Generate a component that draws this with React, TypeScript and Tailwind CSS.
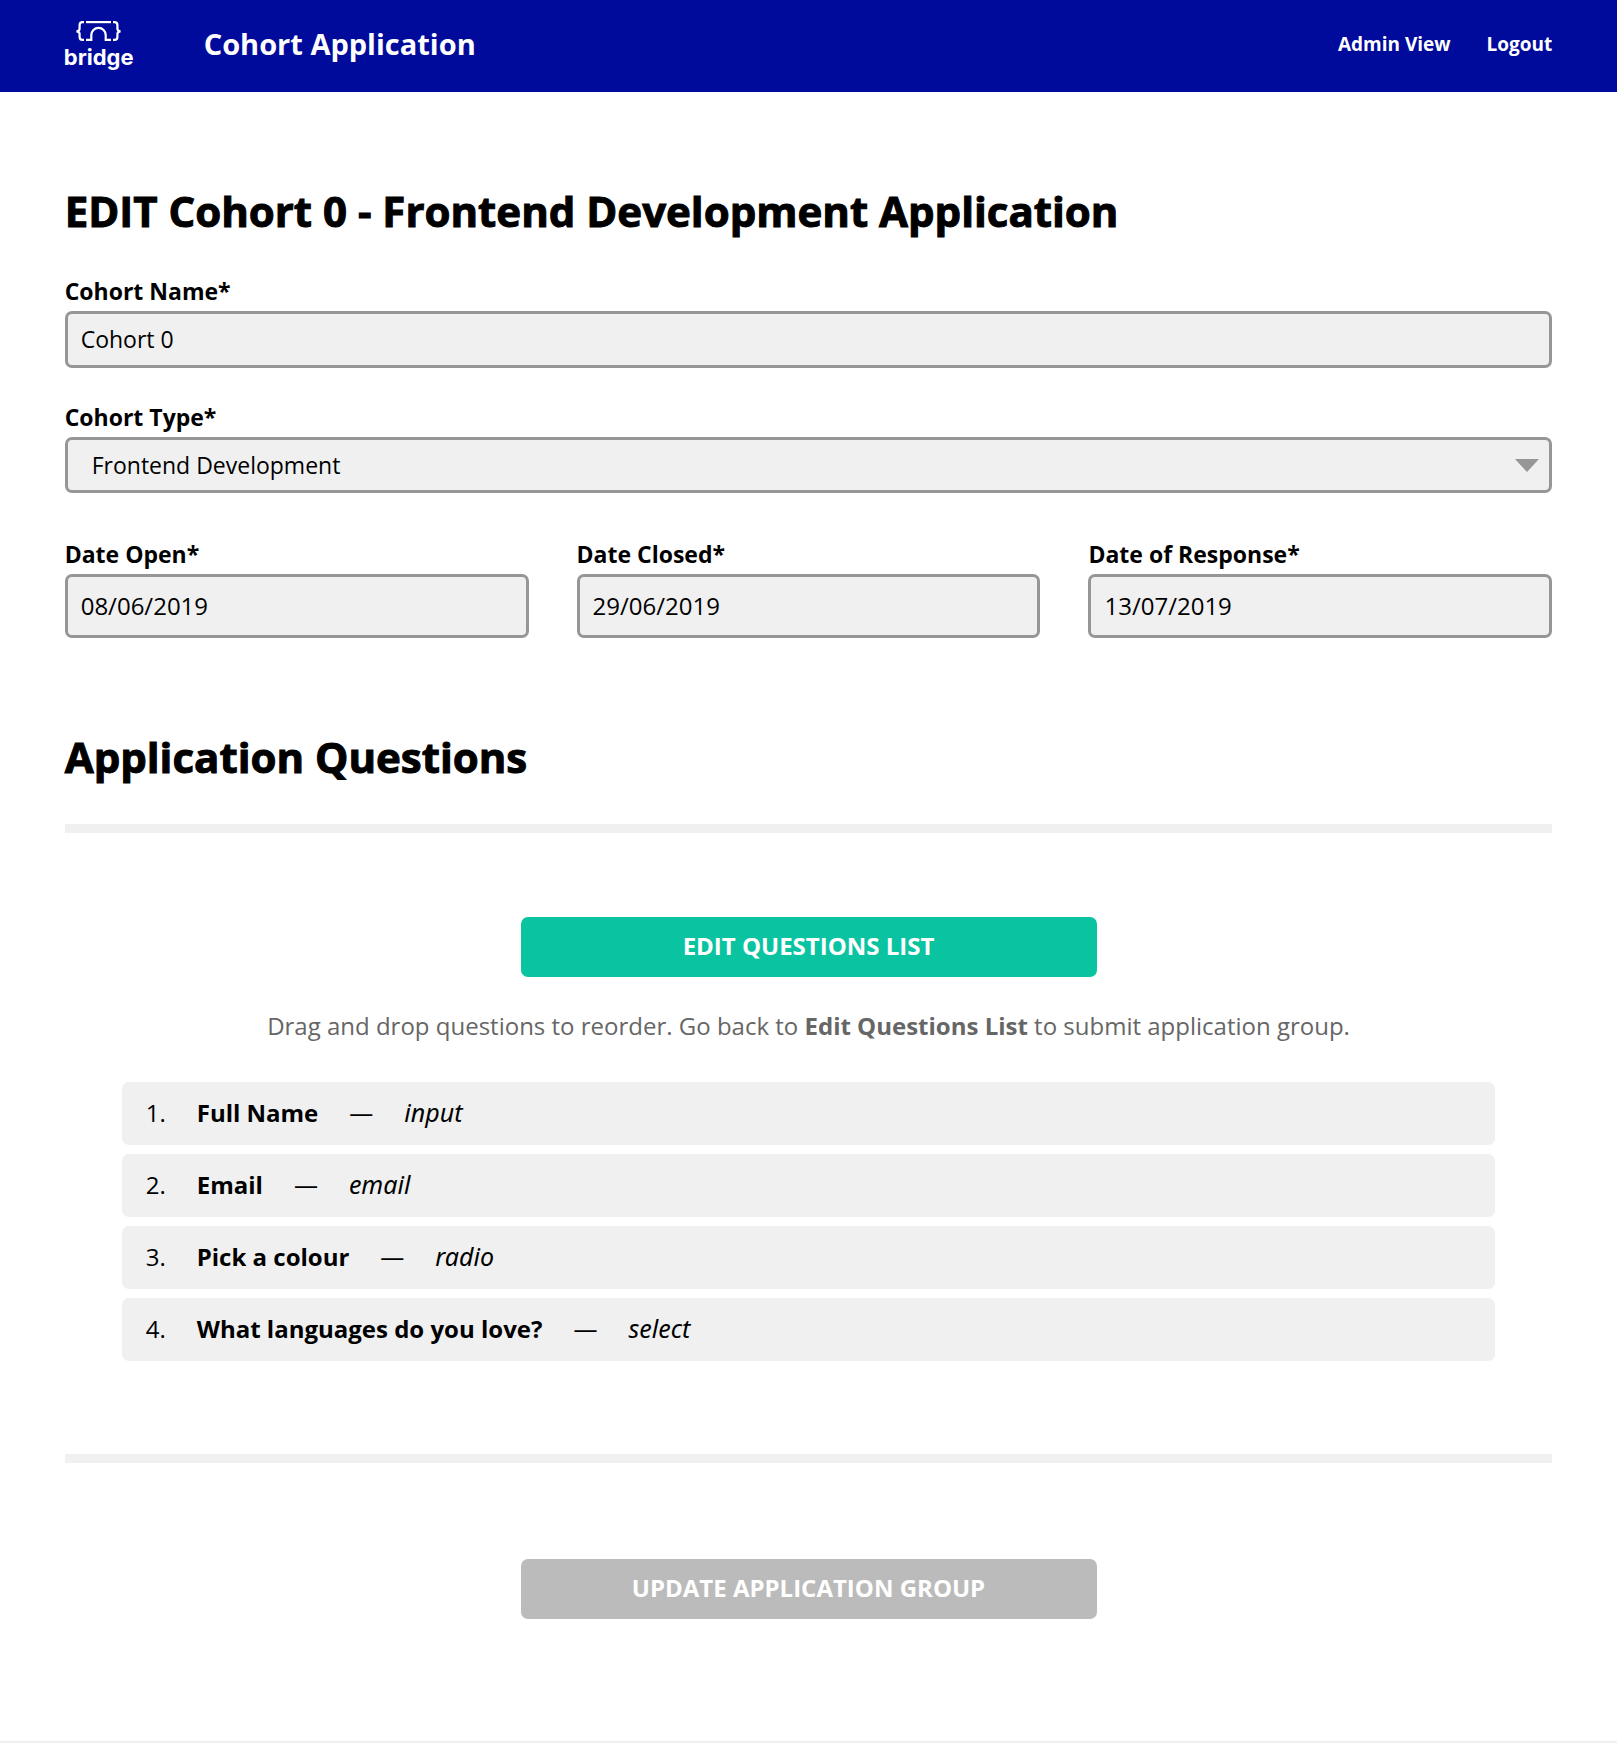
import { useState } from "react";

const fieldClass =
  "block w-full rounded-[7px] border-[3px] border-[#969696] bg-[#f0f0f0] text-black outline-none";

const headingClass =
  "text-[42px] leading-[52px] font-bold [-webkit-text-stroke:1px_currentColor]";

const buttonClass =
  "mx-auto block h-[60px] w-full max-w-[576px] rounded-[7px] pb-[2px] text-[24px] font-bold text-white";

const cohortTypes = ["Frontend Development", "Backend Development", "Design"];

const questions = [
  { name: "Full Name", type: "input" },
  { name: "Email", type: "email" },
  { name: "Pick a colour", type: "radio" },
  { name: "What languages do you love?", type: "select" },
];

const dates = [
  { id: "date-open", label: "Date Open*", value: "08/06/2019" },
  { id: "date-closed", label: "Date Closed*", value: "29/06/2019" },
  { id: "date-response", label: "Date of Response*", value: "13/07/2019" },
];

function Logo() {
  return (
    <a href="#" className="flex w-[68px] flex-col items-center pt-[5px] text-white">
      <svg width="45" height="21" viewBox="0 0 45 21" fill="none" stroke="currentColor" strokeWidth="2.2" aria-hidden="true">
        <path d="M8 1.1H6.4Q3.6 1.1 3.6 4V7.6Q3.6 10.3 0.4 10.3Q3.6 10.3 3.6 13V16Q3.6 18.8 6.4 18.8H8" />
        <path d="M37 1.1H38.6Q41.4 1.1 41.4 4V7.6Q41.4 10.3 44.6 10.3Q41.4 10.3 41.4 13V16Q41.4 18.8 38.6 18.8H37" />
        <path d="M10 1.1H35" />
        <path d="M10 18.8H15.3V14A7.2 7.2 0 0 1 29.7 14V18.8H35" />
      </svg>
      <span className="font-['Inter',sans-serif] text-[22px] leading-[30px] font-bold">bridge</span>
    </a>
  );
}

function Label({ htmlFor, children }: { htmlFor: string; children: string }) {
  return (
    <label htmlFor={htmlFor} className="mb-1 block text-[23px] leading-8 font-bold">
      {children}
    </label>
  );
}

export default function App() {
  const [name, setName] = useState("Cohort 0");
  const [type, setType] = useState(cohortTypes[0]);

  return (
    <div className="bg-white font-['Open_Sans',sans-serif] text-black">
      <header className="flex items-center bg-[#000a9b] px-[4%] pt-4 pb-5 text-white">
        <Logo />
        <span className="ml-[71px] text-[29px] leading-10 font-bold">Cohort Application</span>
        <nav className="ml-auto flex gap-9 text-[19px] leading-7 font-bold">
          <a href="#">Admin View</a>
          <a href="#">Logout</a>
        </nav>
      </header>

      <main className="px-[4%] pt-[93px] pb-[122px]">
        <h1 className={headingClass}>EDIT Cohort 0 - Frontend Development Application</h1>

        <div className="mt-[38px]">
          <Label htmlFor="cohort-name">Cohort Name*</Label>
          <input
            id="cohort-name"
            type="text"
            value={name}
            onChange={(e) => setName(e.target.value)}
            className={`${fieldClass} h-[57px] px-[13px] pb-[2px] text-[23px]`}
          />
        </div>

        <div className="mt-[33px]">
          <Label htmlFor="cohort-type">Cohort Type*</Label>
          <div className="relative">
            <select
              id="cohort-type"
              value={type}
              onChange={(e) => setType(e.target.value)}
              className={`${fieldClass} h-14 appearance-none px-6 text-[23px]`}
            >
              {cohortTypes.map((t) => (
                <option key={t}>{t}</option>
              ))}
            </select>
            <svg
              className="pointer-events-none absolute top-[22px] right-[13px] text-[#969696]"
              width="24"
              height="13"
              viewBox="0 0 24 13"
              aria-hidden="true"
            >
              <path d="M0 0H24L12 13Z" fill="currentColor" />
            </svg>
          </div>
        </div>

        <div className="mt-[45px] grid grid-cols-3 gap-12">
          {dates.map((d) => (
            <div key={d.id}>
              <Label htmlFor={d.id}>{d.label}</Label>
              <input
                id={d.id}
                type="text"
                defaultValue={d.value}
                className={`${fieldClass} h-16 px-[13px] pb-[2px] text-[24px]`}
              />
            </div>
          ))}
        </div>

        <h2 className={`mt-[93px] ${headingClass}`}>Application Questions</h2>
        <hr className="mt-[41px] h-[9px] border-0 bg-[#f0f0f0]" />

        <section className="mt-[84px] px-[57px]">
          <button type="button" className={`${buttonClass} bg-[#0ac4a1]`}>
            EDIT QUESTIONS LIST
          </button>
          <p className="mt-[31px] text-center text-[24px] leading-9 text-[#666666]">
            Drag and drop questions to reorder. Go back to <strong className="font-bold">Edit Questions List</strong> to
            submit application group.
          </p>
          <ol className="mt-[38px] flex flex-col gap-[9px]">
            {questions.map((q, i) => (
              <li
                key={q.name}
                draggable
                className="flex cursor-move items-baseline gap-[31px] rounded-[7px] bg-[#f0f0f0] px-6 pt-[13px] pb-[14px] text-[24px] leading-9"
              >
                <span>{i + 1}.</span>
                <span className="font-bold">{q.name}</span>
                <span>—</span>
                <em className="font-['Noto_Sans',sans-serif] text-[25px] leading-8">{q.type}</em>
              </li>
            ))}
          </ol>
        </section>

        <hr className="mt-[93px] h-[9px] border-0 bg-[#f0f0f0]" />

        <button type="submit" disabled className={`${buttonClass} mt-24 bg-[#bbbbbb]`}>
          UPDATE APPLICATION GROUP
        </button>
      </main>

      <footer className="border-t-2 border-[#f0f0f0]" />
    </div>
  );
}
